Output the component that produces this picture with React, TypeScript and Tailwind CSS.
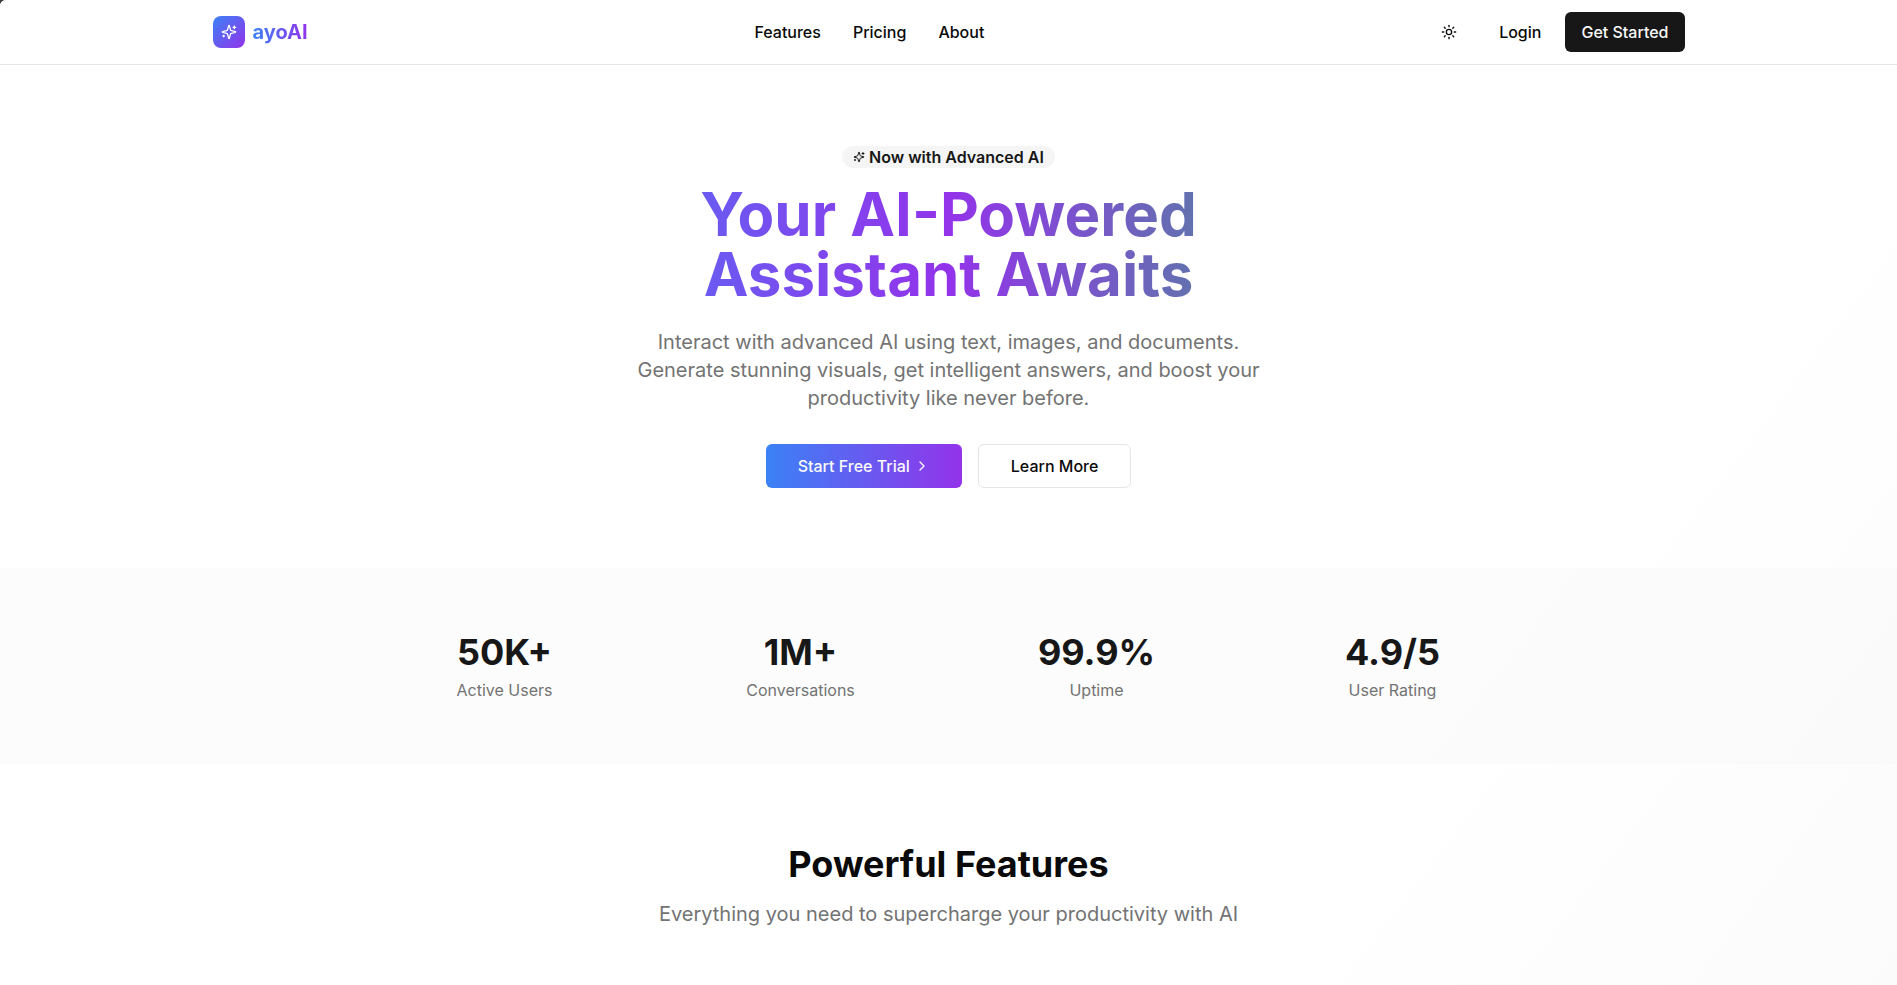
import { ChevronRight, Sun } from 'lucide-react'

const stats = [
  { value: '50K+', label: 'Active Users' },
  { value: '1M+', label: 'Conversations' },
  { value: '99.9%', label: 'Uptime' },
  { value: '4.9/5', label: 'User Rating' },
]

export default function App() {
  return (
    <div className="bg-[#3c3c3c]">
      <div className="min-h-screen overflow-hidden rounded-tl-md bg-white bg-[linear-gradient(to_bottom_right,#fff,#fff_52%,#f6f6f6)] bg-[length:100%_2500px] bg-no-repeat font-['Inter',sans-serif] text-neutral-950">
        {/* Navigation */}
        <header className="border-b border-neutral-200 bg-white">
          <div className="max-w-[1536px] mx-auto px-8 h-16 flex items-center justify-between">
            <a href="#" className="flex items-center gap-2">
              <span className="size-8 rounded-lg bg-linear-to-br/srgb from-[#3b82f6] to-[#9333ea] flex items-center justify-center">
                <SparklesIcon className="size-4 text-white" />
              </span>
              <span className="text-xl font-bold bg-linear-to-r/srgb from-[#3b82f6] to-[#9333ea] bg-clip-text text-transparent">
                ayoAI
              </span>
            </a>
            <nav className="flex items-center gap-8 font-medium">
              <a href="#features">Features</a>
              <a href="#pricing">Pricing</a>
              <a href="#about">About</a>
            </nav>
            <div className="flex items-center gap-4">
              <button aria-label="Toggle theme" className="size-9 flex items-center justify-center">
                <Sun className="size-4" />
              </button>
              <div className="flex items-center gap-2 font-medium">
                <button className="h-10 px-4 rounded-md">Login</button>
                <button className="h-10 px-4 rounded-md bg-neutral-900 text-neutral-50">Get Started</button>
              </div>
            </div>
          </div>
        </header>

        {/* Hero Section */}
        <section className="py-20 px-4 text-center">
          <div className="max-w-4xl mx-auto flex flex-col items-center">
            <div className="h-6 flex items-center">
              <div className="inline-flex items-center gap-1 rounded-full bg-neutral-100 px-[11px] py-[3px] leading-4 font-semibold text-neutral-900">
                <SparklesIcon className="size-3" />
                Now with Advanced AI
              </div>
            </div>
            <h1 className="mt-[15px] w-full text-6xl leading-none font-bold bg-linear-to-r/srgb from-[#4a7af7] via-[#9333ea] to-[#3aa57f] bg-clip-text text-transparent">
              Your AI-Powered
              <br />
              Assistant Awaits
            </h1>
            <p className="mt-6 max-w-2xl text-xl leading-7 text-neutral-500">
              Interact with advanced AI using text, images, and documents. Generate stunning visuals, get
              intelligent answers, and boost your productivity like never before.
            </p>
            <div className="mt-8 flex gap-4 font-medium">
              <button className="h-11 px-8 rounded-md bg-linear-to-r/srgb from-[#3b82f6] to-[#9333ea] text-neutral-50 flex items-center gap-1">
                Start Free Trial
                <ChevronRight className="size-4" />
              </button>
              <button className="h-11 px-8 rounded-md border border-neutral-200 bg-white">Learn More</button>
            </div>
          </div>
        </section>

        {/* Stats */}
        <section className="py-16 px-4 bg-neutral-100/30">
          <div className="max-w-6xl mx-auto grid grid-cols-4 gap-8 text-center">
            {stats.map((stat) => (
              <div key={stat.label}>
                <div className="text-4xl leading-10 font-bold text-neutral-900">{stat.value}</div>
                <div className="mt-2 leading-5 text-neutral-500">{stat.label}</div>
              </div>
            ))}
          </div>
        </section>

        {/* Features */}
        <section id="features" className="py-20 px-4 text-center">
          <h2 className="text-4xl leading-10 font-bold">Powerful Features</h2>
          <p className="mt-4 text-xl leading-7 text-neutral-500">
            Everything you need to supercharge your productivity with AI
          </p>
        </section>
      </div>
    </div>
  )
}

function SparklesIcon({ className }: { className: string }) {
  return (
    <svg
      className={className}
      viewBox="0 0 24 24"
      fill="none"
      stroke="currentColor"
      strokeWidth="2"
      strokeLinecap="round"
      strokeLinejoin="round"
      aria-hidden="true"
    >
      <path d="M9.937 15.5A2 2 0 0 0 8.5 14.063l-6.135-1.582a.5.5 0 0 1 0-.962L8.5 9.936A2 2 0 0 0 9.937 8.5l1.582-6.135a.5.5 0 0 1 .963 0L14.063 8.5A2 2 0 0 0 15.5 9.937l6.135 1.581a.5.5 0 0 1 0 .964L15.5 14.063a2 2 0 0 0-1.437 1.437l-1.582 6.135a.5.5 0 0 1-.963 0z" />
      <path d="M20 3v4M22 5h-4M4 17v2M5 18H3" />
    </svg>
  )
}
